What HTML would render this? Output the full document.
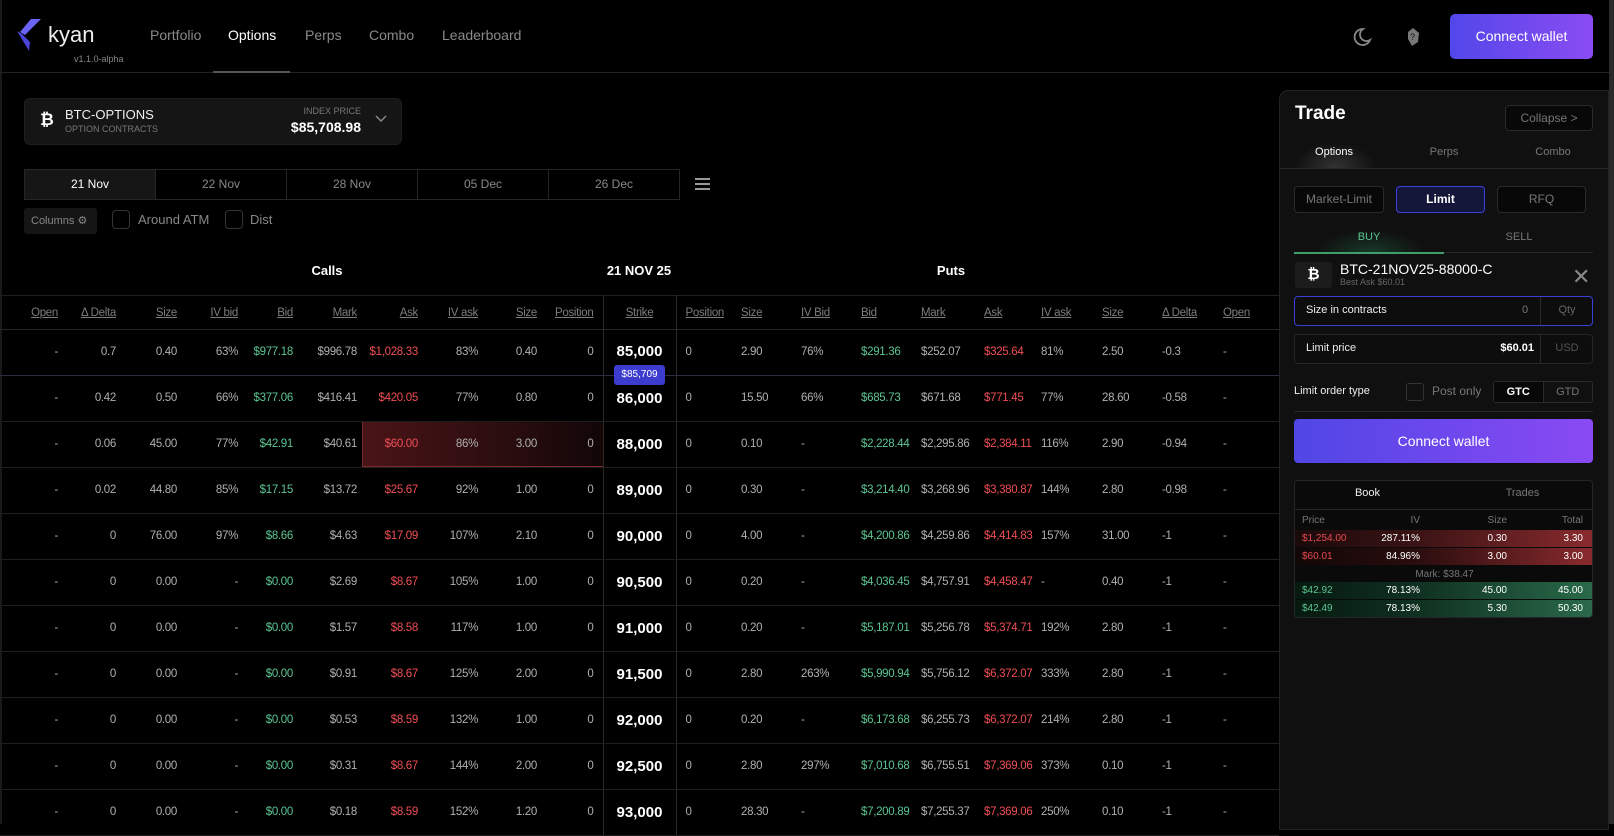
<!DOCTYPE html>
<html><head><meta charset="utf-8"><style>
*{box-sizing:border-box;margin:0;padding:0}
body{width:1614px;height:824px;background:#000;color:#ddd;font-family:"Liberation Sans",sans-serif;overflow:hidden;position:relative}
.a{position:absolute}
.nav{position:absolute;left:0;top:0;width:1614px;height:73px;border-bottom:1px solid #222}
.ni{position:absolute;top:27px;font-size:14px;color:#8a8a8a}
table{position:absolute;left:0;top:295px;width:1279px;border-collapse:collapse;table-layout:fixed;font-size:11.5px;letter-spacing:-0.3px}
td,th{height:46px;border-bottom:1px solid #1f1f1f;white-space:nowrap;overflow:hidden;color:#b0b0b0;font-weight:normal}
th{height:34px;color:#7c7c7c;text-decoration:underline;border-top:1px solid #1f1f1f;border-bottom:1px solid #262626}
td.r,th.r{text-align:right;padding-right:4px}
td.l,th.l{text-align:left;padding-left:5px}
td.s,th.s{text-align:center;border-left:1px solid #2a2a2a;border-right:1px solid #2a2a2a}
td.s{color:#fff;font-weight:bold;font-size:15px;text-decoration:none;letter-spacing:0}
.g{color:#5cc592!important}.rd{color:#ef4e55!important}
.p{position:absolute;left:1279px;top:90px;width:330px;height:740px;background:#101010;border:1px solid #222;border-radius:9px 0 0 0}
.btn{position:absolute;border:1px solid #2a2a2a;border-radius:4px;background:#080808;color:#777;font-size:12px;text-align:center}
</style></head><body>
<div class="a" style="left:0;top:0;width:2px;height:824px;background:#1a1a1a"></div>
<div class="nav">
<svg class="a" style="left:17px;top:19px" width="26" height="32" viewBox="0 0 26 32"><path d="M24 0 L14 0 L3 13 L8 16 Z" fill="#6b63f5"/><path d="M0 12 L12 32 L13 23 L5 15 Z" fill="#4a43d8"/></svg>
<div class="a" style="left:48px;top:22px;font-size:22px;color:#eee;font-weight:500">kyan</div>
<div class="a" style="left:74px;top:54px;font-size:9px;color:#888">v1.1.0-alpha</div>
<div class="ni" style="left:150px">Portfolio</div>
<div class="ni" style="left:228px;color:#fff">Options</div>
<div class="ni" style="left:305px">Perps</div>
<div class="ni" style="left:369px">Combo</div>
<div class="ni" style="left:442px">Leaderboard</div>
<div class="a" style="left:213px;top:71px;width:77px;height:2px;background:#555"></div>
<svg class="a" style="left:1350px;top:26px" width="22" height="22" viewBox="0 0 22 22"><path d="M13 3 A8 8 0 1 0 20 14 A6.5 6.5 0 0 1 13 3 Z" fill="none" stroke="#888" stroke-width="1.8"/></svg>
<svg class="a" style="left:1406px;top:27px" width="14" height="20" viewBox="0 0 14 20"><path d="M7 1 L13 6 L12 15 L6 19 L2 12 L2 5 Z" fill="#777"/><text x="4" y="13" font-size="9" fill="#111" font-family="Liberation Sans">?</text></svg>
<div class="a" style="left:1450px;top:14px;width:143px;height:45px;border-radius:5px;background:linear-gradient(90deg,#5247ea,#8a4cf2);color:#fff;font-size:14px;text-align:center;line-height:45px">Connect wallet</div>
</div>

<div class="a" style="left:24px;top:98px;width:378px;height:47px;background:#151515;border-radius:6px;border:1px solid #1e1e1e"></div>
<div class="a" style="left:40px;top:110px;font-size:17px;font-weight:bold;color:#fff">₿</div>
<div class="a" style="left:65px;top:107px;font-size:13px;color:#eee">BTC-OPTIONS</div>
<div class="a" style="left:65px;top:124px;font-size:9px;color:#777">OPTION CONTRACTS</div>
<div class="a" style="left:300px;top:106px;font-size:9px;color:#777;width:61px;text-align:right">INDEX PRICE</div>
<div class="a" style="left:250px;top:119px;font-size:14px;color:#fff;font-weight:bold;width:111px;text-align:right">$85,708.98</div>
<svg class="a" style="left:374px;top:114px" width="14" height="10"><path d="M2 2 L7 7 L12 2" stroke="#888" fill="none" stroke-width="1.5"/></svg>

<div class="a" style="left:24px;top:169px;width:656px;height:31px;border:1px solid #262626;display:flex;font-size:12px;color:#888">
<div style="flex:1;text-align:center;line-height:29px;background:#161616;color:#fff">21 Nov</div>
<div style="flex:1;text-align:center;line-height:29px;border-left:1px solid #262626">22 Nov</div>
<div style="flex:1;text-align:center;line-height:29px;border-left:1px solid #262626">28 Nov</div>
<div style="flex:1;text-align:center;line-height:29px;border-left:1px solid #262626">05 Dec</div>
<div style="flex:1;text-align:center;line-height:29px;border-left:1px solid #262626">26 Dec</div>
</div>
<div class="a" style="left:695px;top:178px;width:15px;height:2px;background:#999;box-shadow:0 5px 0 #999,0 10px 0 #999"></div>
<div class="a" style="left:24px;top:208px;width:73px;height:26px;background:#151515;border-radius:3px;font-size:11px;color:#888;line-height:26px;padding-left:7px">Columns ⚙</div>
<div class="a" style="left:112px;top:210px;width:18px;height:19px;border:1px solid #333;border-radius:4px"></div>
<div class="a" style="left:138px;top:212px;font-size:13px;color:#888">Around ATM</div>
<div class="a" style="left:225px;top:210px;width:18px;height:19px;border:1px solid #333;border-radius:4px"></div>
<div class="a" style="left:250px;top:212px;font-size:13px;color:#888">Dist</div>

<div class="a" style="left:300px;top:263px;width:54px;text-align:center;font-size:13px;font-weight:bold;color:#fff">Calls</div>
<div class="a" style="left:600px;top:263px;width:78px;text-align:center;font-size:13px;font-weight:bold;color:#fff">21 NOV 25</div>
<div class="a" style="left:920px;top:263px;width:62px;text-align:center;font-size:13px;font-weight:bold;color:#fff">Puts</div>

<div class="a" style="left:362px;top:421px;width:241px;height:46px;background:linear-gradient(90deg,#4a1417,#2a0d0f 60%,#120607);border:1px solid #7a2a2d;border-right:none"></div>

<table>
<colgroup><col style="width:62px"><col style="width:58px"><col style="width:61px"><col style="width:61px"><col style="width:55px"><col style="width:64px"><col style="width:61px"><col style="width:60px"><col style="width:59px"><col style="width:62px"><col style="width:73px"><col style="width:60px"><col style="width:60px"><col style="width:60px"><col style="width:60px"><col style="width:63px"><col style="width:57px"><col style="width:61px"><col style="width:60px"><col style="width:61px"><col style="width:61px"></colgroup>
<tr><th class="r">Open</th><th class="r">Δ Delta</th><th class="r">Size</th><th class="r">IV bid</th><th class="r">Bid</th><th class="r">Mark</th><th class="r">Ask</th><th class="r">IV ask</th><th class="r">Size</th><th class="r" style="padding-right:9px">Position</th><th class="s">Strike</th><th class="l" style="padding-left:9px">Position</th><th class="l">Size</th><th class="l">IV Bid</th><th class="l">Bid</th><th class="l">Mark</th><th class="l">Ask</th><th class="l">IV ask</th><th class="l">Size</th><th class="l">Δ Delta</th><th class="l">Open</th></tr>
</table>
<table style="top:329px" id="t">
<colgroup><col style="width:62px"><col style="width:58px"><col style="width:61px"><col style="width:61px"><col style="width:55px"><col style="width:64px"><col style="width:61px"><col style="width:60px"><col style="width:59px"><col style="width:62px"><col style="width:73px"><col style="width:60px"><col style="width:60px"><col style="width:60px"><col style="width:60px"><col style="width:63px"><col style="width:57px"><col style="width:61px"><col style="width:60px"><col style="width:61px"><col style="width:61px"></colgroup>
<tr><td class="r">-</td><td class="r">0.7</td><td class="r">0.40</td><td class="r">63%</td><td class="r g">$977.18</td><td class="r">$996.78</td><td class="r rd">$1,028.33</td><td class="r">83%</td><td class="r">0.40</td><td class="r" style="padding-right:9px">0</td><td class="s">85,000</td><td class="l" style="padding-left:9px">0</td><td class="l">2.90</td><td class="l">76%</td><td class="l g">$291.36</td><td class="l">$252.07</td><td class="l rd">$325.64</td><td class="l">81%</td><td class="l">2.50</td><td class="l">-0.3</td><td class="l">-</td></tr>
<tr><td class="r">-</td><td class="r">0.42</td><td class="r">0.50</td><td class="r">66%</td><td class="r g">$377.06</td><td class="r">$416.41</td><td class="r rd">$420.05</td><td class="r">77%</td><td class="r">0.80</td><td class="r" style="padding-right:9px">0</td><td class="s">86,000</td><td class="l" style="padding-left:9px">0</td><td class="l">15.50</td><td class="l">66%</td><td class="l g">$685.73</td><td class="l">$671.68</td><td class="l rd">$771.45</td><td class="l">77%</td><td class="l">28.60</td><td class="l">-0.58</td><td class="l">-</td></tr>
<tr><td class="r">-</td><td class="r">0.06</td><td class="r">45.00</td><td class="r">77%</td><td class="r g">$42.91</td><td class="r">$40.61</td><td class="r rd">$60.00</td><td class="r">86%</td><td class="r">3.00</td><td class="r" style="padding-right:9px">0</td><td class="s">88,000</td><td class="l" style="padding-left:9px">0</td><td class="l">0.10</td><td class="l">-</td><td class="l g">$2,228.44</td><td class="l">$2,295.86</td><td class="l rd">$2,384.11</td><td class="l">116%</td><td class="l">2.90</td><td class="l">-0.94</td><td class="l">-</td></tr>
<tr><td class="r">-</td><td class="r">0.02</td><td class="r">44.80</td><td class="r">85%</td><td class="r g">$17.15</td><td class="r">$13.72</td><td class="r rd">$25.67</td><td class="r">92%</td><td class="r">1.00</td><td class="r" style="padding-right:9px">0</td><td class="s">89,000</td><td class="l" style="padding-left:9px">0</td><td class="l">0.30</td><td class="l">-</td><td class="l g">$3,214.40</td><td class="l">$3,268.96</td><td class="l rd">$3,380.87</td><td class="l">144%</td><td class="l">2.80</td><td class="l">-0.98</td><td class="l">-</td></tr>
<tr><td class="r">-</td><td class="r">0</td><td class="r">76.00</td><td class="r">97%</td><td class="r g">$8.66</td><td class="r">$4.63</td><td class="r rd">$17.09</td><td class="r">107%</td><td class="r">2.10</td><td class="r" style="padding-right:9px">0</td><td class="s">90,000</td><td class="l" style="padding-left:9px">0</td><td class="l">4.00</td><td class="l">-</td><td class="l g">$4,200.86</td><td class="l">$4,259.86</td><td class="l rd">$4,414.83</td><td class="l">157%</td><td class="l">31.00</td><td class="l">-1</td><td class="l">-</td></tr>
<tr><td class="r">-</td><td class="r">0</td><td class="r">0.00</td><td class="r">-</td><td class="r g">$0.00</td><td class="r">$2.69</td><td class="r rd">$8.67</td><td class="r">105%</td><td class="r">1.00</td><td class="r" style="padding-right:9px">0</td><td class="s">90,500</td><td class="l" style="padding-left:9px">0</td><td class="l">0.20</td><td class="l">-</td><td class="l g">$4,036.45</td><td class="l">$4,757.91</td><td class="l rd">$4,458.47</td><td class="l">-</td><td class="l">0.40</td><td class="l">-1</td><td class="l">-</td></tr>
<tr><td class="r">-</td><td class="r">0</td><td class="r">0.00</td><td class="r">-</td><td class="r g">$0.00</td><td class="r">$1.57</td><td class="r rd">$8.58</td><td class="r">117%</td><td class="r">1.00</td><td class="r" style="padding-right:9px">0</td><td class="s">91,000</td><td class="l" style="padding-left:9px">0</td><td class="l">0.20</td><td class="l">-</td><td class="l g">$5,187.01</td><td class="l">$5,256.78</td><td class="l rd">$5,374.71</td><td class="l">192%</td><td class="l">2.80</td><td class="l">-1</td><td class="l">-</td></tr>
<tr><td class="r">-</td><td class="r">0</td><td class="r">0.00</td><td class="r">-</td><td class="r g">$0.00</td><td class="r">$0.91</td><td class="r rd">$8.67</td><td class="r">125%</td><td class="r">2.00</td><td class="r" style="padding-right:9px">0</td><td class="s">91,500</td><td class="l" style="padding-left:9px">0</td><td class="l">2.80</td><td class="l">263%</td><td class="l g">$5,990.94</td><td class="l">$5,756.12</td><td class="l rd">$6,372.07</td><td class="l">333%</td><td class="l">2.80</td><td class="l">-1</td><td class="l">-</td></tr>
<tr><td class="r">-</td><td class="r">0</td><td class="r">0.00</td><td class="r">-</td><td class="r g">$0.00</td><td class="r">$0.53</td><td class="r rd">$8.59</td><td class="r">132%</td><td class="r">1.00</td><td class="r" style="padding-right:9px">0</td><td class="s">92,000</td><td class="l" style="padding-left:9px">0</td><td class="l">0.20</td><td class="l">-</td><td class="l g">$6,173.68</td><td class="l">$6,255.73</td><td class="l rd">$6,372.07</td><td class="l">214%</td><td class="l">2.80</td><td class="l">-1</td><td class="l">-</td></tr>
<tr><td class="r">-</td><td class="r">0</td><td class="r">0.00</td><td class="r">-</td><td class="r g">$0.00</td><td class="r">$0.31</td><td class="r rd">$8.67</td><td class="r">144%</td><td class="r">2.00</td><td class="r" style="padding-right:9px">0</td><td class="s">92,500</td><td class="l" style="padding-left:9px">0</td><td class="l">2.80</td><td class="l">297%</td><td class="l g">$7,010.68</td><td class="l">$6,755.51</td><td class="l rd">$7,369.06</td><td class="l">373%</td><td class="l">0.10</td><td class="l">-1</td><td class="l">-</td></tr>
<tr><td class="r">-</td><td class="r">0</td><td class="r">0.00</td><td class="r">-</td><td class="r g">$0.00</td><td class="r">$0.18</td><td class="r rd">$8.59</td><td class="r">152%</td><td class="r">1.20</td><td class="r" style="padding-right:9px">0</td><td class="s">93,000</td><td class="l" style="padding-left:9px">0</td><td class="l">28.30</td><td class="l">-</td><td class="l g">$7,200.89</td><td class="l">$7,255.37</td><td class="l rd">$7,369.06</td><td class="l">250%</td><td class="l">0.10</td><td class="l">-1</td><td class="l">-</td></tr>
</table>
<div class="a" style="left:0;top:375px;width:1279px;height:1px;background:#2a2c40"></div>
<div class="a" style="left:614px;top:365px;width:51px;height:20px;background:#3c3ccf;border-radius:3px;color:#fff;font-size:10px;text-align:center;line-height:20px">$85,709</div>

<div class="p"></div>
<div class="a" style="left:1609px;top:0;width:5px;height:824px;background:#2a2a2a"></div>
<div class="a" style="left:1295px;top:103px;font-size:19px;font-weight:bold;color:#fff">Trade</div>
<div class="btn" style="left:1505px;top:105px;width:88px;height:26px;line-height:24px">Collapse &gt;</div>
<div class="a" style="left:1290px;top:140px;width:90px;height:28px;background:radial-gradient(ellipse at 50% 100%,#333 0,transparent 65%)"></div>
<div class="a" style="left:1304px;top:146px;width:60px;text-align:center;font-size:11px;color:#fff">Options</div>
<div class="a" style="left:1414px;top:146px;width:60px;text-align:center;font-size:11px;color:#777">Perps</div>
<div class="a" style="left:1523px;top:146px;width:60px;text-align:center;font-size:11px;color:#777">Combo</div>
<div class="a" style="left:1280px;top:168px;width:329px;height:1px;background:#262626"></div>
<div class="btn" style="left:1294px;top:186px;width:90px;height:27px;line-height:25px">Market-Limit</div>
<div class="btn" style="left:1396px;top:186px;width:89px;height:27px;line-height:25px;background:#14163a;border-color:#3d40e0;color:#fff;font-weight:bold">Limit</div>
<div class="btn" style="left:1497px;top:186px;width:89px;height:27px;line-height:25px">RFQ</div>
<div class="a" style="left:1310px;top:228px;width:120px;height:25px;background:radial-gradient(ellipse at 50% 100%,#183a28 0,transparent 65%)"></div>
<div class="a" style="left:1339px;top:231px;width:60px;text-align:center;font-size:11px;color:#5cc592">BUY</div>
<div class="a" style="left:1489px;top:231px;width:60px;text-align:center;font-size:11px;color:#777">SELL</div>
<div class="a" style="left:1294px;top:252px;width:299px;height:1px;background:#262626"></div>
<div class="a" style="left:1294px;top:252px;width:150px;height:2px;background:#3f9e6c"></div>
<div class="a" style="left:1295px;top:262px;width:37px;height:26px;background:#1c1c1c;border-radius:3px;color:#fff;font-weight:bold;font-size:15px;text-align:center;line-height:26px">₿</div>
<div class="a" style="left:1340px;top:261px;font-size:14px;color:#fff">BTC-21NOV25-88000-C</div>
<div class="a" style="left:1340px;top:277px;font-size:9px;color:#666">Best Ask $60.01</div>
<div class="a" style="left:1572px;top:264px;font-size:22px;color:#888">✕</div>
<div class="a" style="left:1294px;top:296px;width:299px;height:30px;border:1px solid #3b3fd6;border-radius:4px;background:#0d0d0d"></div>
<div class="a" style="left:1306px;top:304px;font-size:11px;color:#eee">Size in contracts</div>
<div class="a" style="left:1522px;top:304px;font-size:11px;color:#777">0</div>
<div class="a" style="left:1540px;top:297px;width:1px;height:28px;background:#2a2a2a"></div>
<div class="a" style="left:1541px;top:304px;width:52px;text-align:center;font-size:11px;color:#666">Qty</div>
<div class="a" style="left:1294px;top:334px;width:299px;height:30px;border:1px solid #262626;border-radius:4px;background:#0d0d0d"></div>
<div class="a" style="left:1306px;top:342px;font-size:11px;color:#eee">Limit price</div>
<div class="a" style="left:1480px;top:342px;width:54px;text-align:right;font-size:11px;color:#fff;font-weight:bold">$60.01</div>
<div class="a" style="left:1540px;top:335px;width:1px;height:28px;background:#2a2a2a"></div>
<div class="a" style="left:1541px;top:342px;width:52px;text-align:center;font-size:11px;color:#555">USD</div>
<div class="a" style="left:1294px;top:385px;font-size:11px;color:#eee">Limit order type</div>
<div class="a" style="left:1406px;top:383px;width:18px;height:18px;border:1px solid #333;border-radius:3px"></div>
<div class="a" style="left:1432px;top:384px;font-size:12px;color:#777">Post only</div>
<div class="a" style="left:1493px;top:381px;width:100px;height:22px;border:1px solid #2a2a2a;border-radius:3px;display:flex;font-size:11px;line-height:20px;text-align:center">
<div style="flex:1;color:#fff;font-weight:bold;background:#080808">GTC</div><div style="flex:1;color:#777;border-left:1px solid #2a2a2a">GTD</div></div>
<div class="a" style="left:1294px;top:411px;width:299px;height:1px;background:#262626"></div>
<div class="a" style="left:1294px;top:419px;width:299px;height:44px;border-radius:4px;background:linear-gradient(90deg,#5046e6,#8a4af3);color:#fff;font-size:14px;text-align:center;line-height:44px">Connect wallet</div>
<div class="a" style="left:1294px;top:480px;width:299px;height:138px;border:1px solid #262626;border-radius:4px;background:#0a0a0a;overflow:hidden;font-size:10px">
<div class="a" style="left:0;top:6px;width:145px;text-align:center;font-size:11px;color:#eee">Book</div>
<div class="a" style="left:155px;top:6px;width:145px;text-align:center;font-size:11px;color:#777">Trades</div>
<div class="a" style="left:0;top:28px;width:299px;height:1px;background:#262626"></div>
<div class="a" style="left:7px;top:34px;color:#777">Price</div>
<div class="a" style="left:80px;top:34px;width:45px;text-align:right;color:#777">IV</div>
<div class="a" style="left:165px;top:34px;width:47px;text-align:right;color:#777">Size</div>
<div class="a" style="left:240px;top:34px;width:48px;text-align:right;color:#777">Total</div>
<div class="a" style="left:0;top:49px;width:299px;height:17px;background:linear-gradient(90deg,#1a0a0a,#3a1314 40%,#8a2b2e);"></div>
<div class="a" style="left:0;top:67px;width:299px;height:17px;background:linear-gradient(90deg,#120707,#2a0d0e 40%,#8a2b2e);"></div>
<div class="a" style="left:7px;top:52px;color:#e8494f">$1,254.00</div><div class="a" style="left:60px;top:52px;width:65px;text-align:right;color:#fff">287.11%</div><div class="a" style="left:165px;top:52px;width:47px;text-align:right;color:#fff">0.30</div><div class="a" style="left:240px;top:52px;width:48px;text-align:right;color:#fff">3.30</div>
<div class="a" style="left:7px;top:70px;color:#e8494f">$60.01</div><div class="a" style="left:60px;top:70px;width:65px;text-align:right;color:#fff">84.96%</div><div class="a" style="left:165px;top:70px;width:47px;text-align:right;color:#fff">3.00</div><div class="a" style="left:240px;top:70px;width:48px;text-align:right;color:#fff">3.00</div>
<div class="a" style="left:0;top:88px;width:299px;text-align:center;color:#777">Mark: $38.47</div>
<div class="a" style="left:0;top:101px;width:299px;height:17px;background:linear-gradient(90deg,#071a10,#0f3020 40%,#2a6a4a);"></div>
<div class="a" style="left:0;top:119px;width:299px;height:18px;background:linear-gradient(90deg,#071a10,#0f3020 40%,#2a6a4a);"></div>
<div class="a" style="left:7px;top:104px;color:#5cc592">$42.92</div><div class="a" style="left:60px;top:104px;width:65px;text-align:right;color:#fff">78.13%</div><div class="a" style="left:165px;top:104px;width:47px;text-align:right;color:#fff">45.00</div><div class="a" style="left:240px;top:104px;width:48px;text-align:right;color:#fff">45.00</div>
<div class="a" style="left:7px;top:122px;color:#5cc592">$42.49</div><div class="a" style="left:60px;top:122px;width:65px;text-align:right;color:#fff">78.13%</div><div class="a" style="left:165px;top:122px;width:47px;text-align:right;color:#fff">5.30</div><div class="a" style="left:240px;top:122px;width:48px;text-align:right;color:#fff">50.30</div>
</div>
</body></html>
